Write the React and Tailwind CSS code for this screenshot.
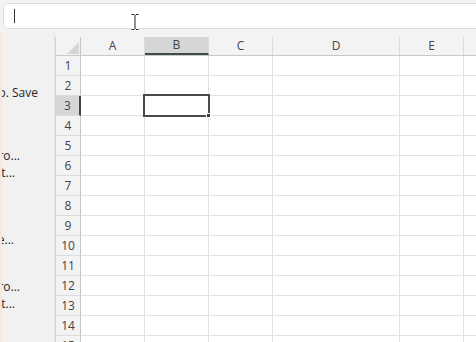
import React from 'react';

const cols = [
  { name: 'A', w: 'w-[64px]' },
  { name: 'B', w: 'w-[64px]' },
  { name: 'C', w: 'w-[64px]' },
  { name: 'D', w: 'w-[127px]' },
  { name: 'E', w: 'w-[64px]' },
  { name: '', w: 'w-[64px]' },
];

const rows = Array.from({ length: 15 }, (_, i) => i + 1);

function IBeam() {
  return (
    <svg className="absolute left-[130px] top-[13px]" width="10" height="18" viewBox="0 0 10 18">
      <path d="M1.5 1.5h2.5l1 1 1-1h2.5M5 2.5v13M1.5 16.5h2.5l1-1 1 1h2.5" fill="none" stroke="#ffffff" strokeWidth="2.5" />
      <path d="M1.5 1.5h2.5l1 1 1-1h2.5M5 2.5v13M1.5 16.5h2.5l1-1 1 1h2.5" fill="none" stroke="#2b2b2b" strokeWidth="1" />
    </svg>
  );
}

function SideText({ text, w, className }) {
  return (
    <div className={`${w} ${className} h-[17px] overflow-hidden flex justify-end whitespace-nowrap leading-[17px]`}>
      {text}
    </div>
  );
}

export default function App() {
  return (
    <div
      className="relative w-[476px] h-[342px] overflow-hidden bg-[#f3f3f3] flex flex-col text-[12px]"
      style={{ fontFamily: '"Open Sans", "Noto Sans", sans-serif' }}
    >
      {/* formula bar */}
      <div className="h-[32px] shrink-0 pl-[3px] pt-[3px]">
        <div className="h-[26px] -mr-[10px] rounded-[5px] border border-[#dcdcdc] bg-white flex items-center pl-[10px]">
          <div className="w-[1px] h-[14px] bg-[#333]" />
        </div>
      </div>
      <IBeam />

      <div className="flex flex-1 min-h-0">
        {/* left task pane, clipped */}
        <div className="w-[55px] shrink-0 border-l-2 border-l-[#f8e8dc] border-r border-r-[#e2e2e2] bg-[#f1f1f1] text-[#262626] flex flex-col">
          <SideText text="Undo. Save" w="w-[36px]" className="mt-[52px]" />
          <SideText text="Macro..." w="w-[18px]" className="mt-[46px]" />
          <SideText text="Edit..." w="w-[13px]" />
          <SideText text="Delete..." w="w-[12px]" className="mt-[50px]" />
          <SideText text="Macro..." w="w-[18px]" className="mt-[30px]" />
          <SideText text="Edit..." w="w-[13px]" />
        </div>

        {/* sheet grid */}
        <div className="flex-1 pt-[5px] overflow-hidden">
          <div className="flex flex-col bg-white border-l border-[#d4d4d4] w-max">
            {/* column header */}
            <div className="flex h-[19px] bg-[#f3f3f3] border-b border-[#c9c9c9] text-[#444]">
              <div className="relative w-[25px] h-full border-r border-[#c6c6c6]">
                <div className="absolute right-[1px] bottom-[1px] w-0 h-0 border-l-[12px] border-l-transparent border-b-[12px] border-b-[#d6d6d6]" />
              </div>
              {cols.map((c) => (
                <div
                  key={c.name + c.w}
                  className={`${c.w} h-full flex items-center justify-center border-r border-[#dadada] ${
                    c.name === 'B' ? 'bg-[#d6d6d6] border-b-2 border-b-[#3f4b43] -mb-[1px]' : ''
                  }`}
                >
                  {c.name}
                </div>
              ))}
            </div>

            {rows.map((r) => (
              <div key={r} className="flex h-[20px]">
                <div
                  className={`w-[25px] h-full flex items-center justify-center text-[#444] border-b border-[#dcdcdc] ${
                    r === 3 ? 'bg-[#d6d6d6] border-r-2 border-r-[#444]' : 'bg-[#f3f3f3] border-r border-r-[#c6c6c6]'
                  }`}
                >
                  {r}
                </div>
                {cols.map((c) => (
                  <div
                    key={c.name + c.w}
                    className={`${c.w} h-full relative border-r border-b border-[#e1e1e1]`}
                  >
                    {r === 3 && c.name === 'B' && (
                      <div className="absolute -top-[2px] -left-[2px] -right-[2px] -bottom-[2px] border-2 border-[#4a4a4a] z-10">
                        <div className="absolute -right-[3px] -bottom-[3px] w-[5px] h-[5px] bg-[#3a3a3a] border border-white" />
                      </div>
                    )}
                  </div>
                ))}
              </div>
            ))}
          </div>
        </div>
      </div>
    </div>
  );
}
